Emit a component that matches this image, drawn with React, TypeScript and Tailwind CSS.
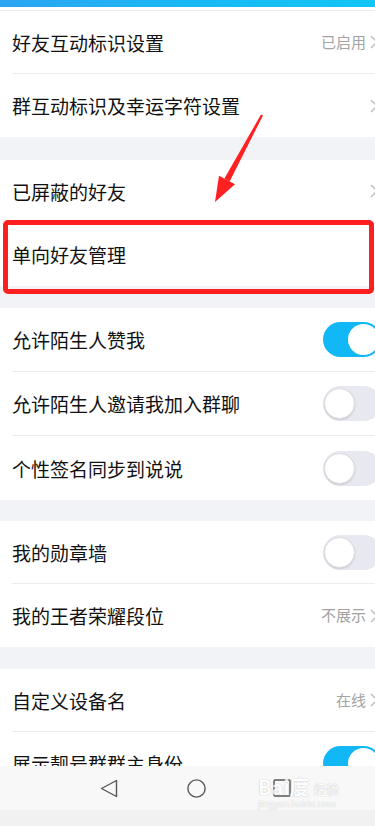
import type { ReactElement } from "react";

type Row = {
  label: string;
  value?: string;
  chevron?: boolean;
  toggle?: "on" | "off";
};

type Section = {
  rows: Row[];
  rowHeight: string;
  gapAfter?: string;
};

const sections: Section[] = [
  {
    rowHeight: "h-[63px]",
    gapAfter: "h-[23px]",
    rows: [
      { label: "好友互动标识设置", value: "已启用", chevron: true },
      { label: "群互动标识及幸运字符设置", chevron: true },
    ],
  },
  {
    rowHeight: "h-[63px]",
    gapAfter: "h-[22px]",
    rows: [
      { label: "已屏蔽的好友", chevron: true },
      { label: "单向好友管理" },
    ],
  },
  {
    rowHeight: "h-[64px]",
    gapAfter: "h-[21px]",
    rows: [
      { label: "允许陌生人赞我", toggle: "on" },
      { label: "允许陌生人邀请我加入群聊", toggle: "off" },
      { label: "个性签名同步到说说", toggle: "off" },
    ],
  },
  {
    rowHeight: "h-[63px]",
    gapAfter: "h-[22px]",
    rows: [
      { label: "我的勋章墙", toggle: "off" },
      { label: "我的王者荣耀段位", value: "不展示", chevron: true },
    ],
  },
  {
    rowHeight: "h-[63px]",
    rows: [
      { label: "自定义设备名", value: "在线", chevron: true },
      { label: "展示靓号群群主身份", toggle: "on" },
    ],
  },
];

function Chevron(): ReactElement {
  return (
    <svg width="8" height="14" viewBox="0 0 8 14" className="shrink-0">
      <path d="M1 1l6 6-6 6" fill="none" stroke="#bdbdbd" strokeWidth="1.4" />
    </svg>
  );
}

function Toggle({ on }: { on: boolean }): ReactElement {
  return (
    <div
      className={`relative -mr-[6px] h-[35px] w-[58px] shrink-0 rounded-full ${
        on ? "bg-[#12b7f5]" : "bg-[#e7e8f0]"
      }`}
    >
      <div
        className={`absolute top-[2px] h-[31px] w-[31px] rounded-full bg-white ${
          on ? "right-[2px]" : "left-[1px] border border-[#dcdde3] shadow-[0_1px_2px_rgba(0,0,0,0.12)]"
        }`}
      />
    </div>
  );
}

function SettingRow({
  row,
  height,
  last,
}: {
  row: Row;
  height: string;
  last: boolean;
}): ReactElement {
  return (
    <div className="pl-3 bg-white">
      <div
        className={`flex items-center ${height} ${
          last ? "" : "border-b border-[#ececef]"
        }`}
      >
        <span className="text-[19px] leading-none text-[#111]">{row.label}</span>
        <div className="ml-auto flex items-center">
          {row.value && (
            <span className="mr-[4px] text-[15px] text-[#a3a3a3]">{row.value}</span>
          )}
          {row.chevron && (
            <div className="-mr-[3px]">
              <Chevron />
            </div>
          )}
          {row.toggle && <Toggle on={row.toggle === "on"} />}
        </div>
      </div>
    </div>
  );
}

export default function App(): ReactElement {
  return (
    <div
      className="relative h-[826px] w-[375px] overflow-hidden bg-[#f2f3f7]"
      style={{ fontFamily: '"Noto Sans CJK SC", "Noto Sans", sans-serif' }}
    >
      {/* top bar */}
      <div className="h-[7px] bg-gradient-to-r from-[#2ba4f2] via-[#19b9f4] to-[#12c6f6]" />
      <div className="h-[4px] bg-white border-b border-[#ececef]" />

      {sections.map((section, si) => (
        <div key={si}>
          <div>
            {section.rows.map((row, ri) => (
              <SettingRow
                key={row.label}
                row={row}
                height={section.rowHeight}
                last={ri === section.rows.length - 1}
              />
            ))}
          </div>
          {section.gapAfter && <div className={section.gapAfter} />}
        </div>
      ))}

      {/* red highlight box */}
      <div className="absolute left-[3px] top-[220px] h-[74px] w-[371px] rounded-[5px] border-[5px] border-[#ff1f1f]" />

      {/* red arrow */}
      <svg className="absolute left-0 top-0" width="375" height="826" viewBox="0 0 375 826">
        <polygon points="263,115.5 261,114.5 224.4,178.6 229.6,181.4" fill="#ff2121" />
        <polygon points="215,202 219,175.7 235,184.3" fill="#ff2121" />
      </svg>

      {/* bottom nav */}
      <div className="absolute bottom-0 left-0 w-full">
        <div className="relative h-[44px] bg-[#f8f8f8]">
          <svg className="absolute left-[100px] top-[13px]" width="18" height="19" viewBox="0 0 18 19">
            <path d="M16.5 1.5v16L1.5 9.5z" fill="none" stroke="#555" strokeWidth="1.4" strokeLinejoin="round" />
          </svg>
          <svg className="absolute left-[187px] top-[13px]" width="19" height="19" viewBox="0 0 19 19">
            <circle cx="9.5" cy="9.5" r="8.6" fill="none" stroke="#555" strokeWidth="1.4" />
          </svg>
          <svg className="absolute left-[273px] top-[13px]" width="18" height="18" viewBox="0 0 18 18">
            <rect x="1" y="1" width="16" height="16" rx="1" fill="none" stroke="#555" strokeWidth="1.4" />
          </svg>
          {/* watermark */}
          <div className="absolute left-[258px] top-[10px] flex w-[90px] flex-col items-start opacity-80">
            <div className="flex h-[22px] items-end gap-1 text-white [text-shadow:0_0_1px_#9a9a9a]">
              <span className="text-[20px] font-bold leading-[22px]">Bai度</span>
              <span className="text-[13px] leading-[18px]">经验</span>
            </div>
            <div className="h-[11px] text-[9px] leading-[11px] text-white [text-shadow:0_0_1px_#aaa]">
              jingyan.baidu.com
            </div>
          </div>
        </div>
        <div className="h-[16px] bg-[#f1f1f1]" />
      </div>
    </div>
  );
}
